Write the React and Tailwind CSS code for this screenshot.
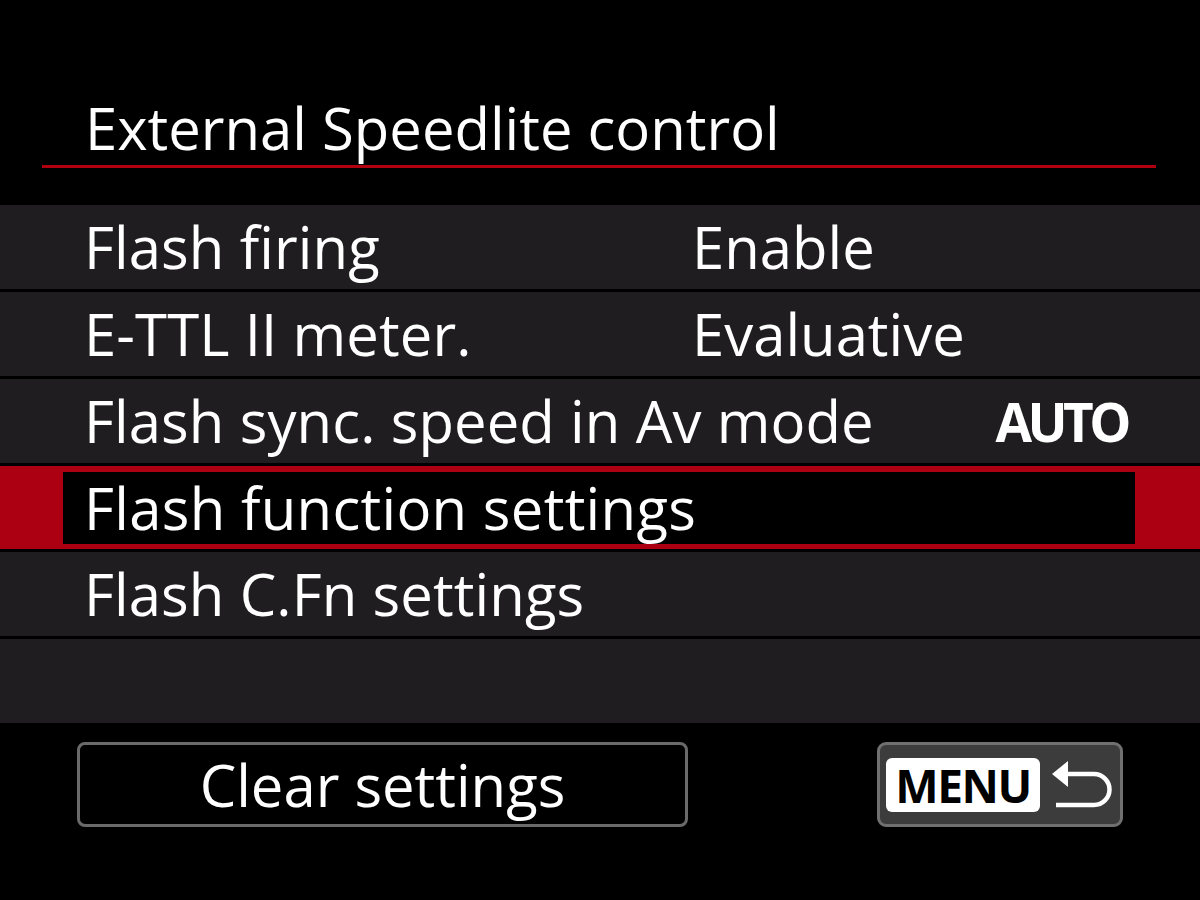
import React from 'react';

const rows = [
  { label: 'Flash firing', value: 'Enable' },
  { label: 'E-TTL II meter.', value: 'Evaluative' },
  { label: 'Flash sync. speed in Av mode', value: 'AUTO', bold: true },
  { label: 'Flash function settings', selected: true },
  { label: 'Flash C.Fn settings' },
];

const ReturnIcon = () => (
  <svg width="62" height="56" viewBox="0 0 62 56" className="block">
    <path d="M0 17 L16 4 L16 30 Z" fill="white" />
    <path d="M14 17 H42 A15.5 15.5 0 0 1 42 48 H4" fill="none" stroke="white" strokeWidth="4.5" />
  </svg>
);

const Row = ({ label, value, bold, selected }) => {
  if (selected) {
    return (
      <div className="h-[86px] bg-[#ac0012] flex items-center border-b-[3px] border-black">
        <div className="ml-[63px] w-[1072px] h-[72px] bg-black flex items-center pl-[21px]">
          <span className="text-[58px] leading-none whitespace-nowrap tracking-[0.3px]">{label}</span>
        </div>
      </div>
    );
  }
  return (
    <div className="h-[87px] bg-[#1f1d1f] flex items-center border-b-[3px] border-black pl-[84px]">
      <span className="text-[58px] leading-none min-w-[608px] whitespace-nowrap tracking-[0.1px]">{label}</span>
      {value && !bold && <span className="text-[58px] leading-none whitespace-nowrap">{value}</span>}
      {bold && <span className="ml-auto mr-[73px] text-[53px] font-bold leading-none tracking-[-4.5px]">{value}</span>}
    </div>
  );
};

export default function App() {
  return (
    <div className="w-[1200px] h-[900px] bg-black text-white font-['Open_Sans',sans-serif] overflow-hidden">
      <div className="h-[205px] flex flex-col">
        <div className="h-[165px] pl-[85px] flex items-end pb-[8px]">
          <span className="text-[58px] leading-none whitespace-nowrap">External Speedlite control</span>
        </div>
        <div className="ml-[42px] w-[1114px] h-[3px] bg-[#b0000f]" />
      </div>
      <div className="flex flex-col">
        {rows.map((r) => (
          <Row key={r.label} {...r} />
        ))}
        <div className="h-[84px] bg-[#1f1d1f]" />
      </div>
      <div className="flex items-center justify-between pl-[77px] pr-[77px] pt-[19px]">
        <div className="w-[611px] h-[85px] border-[3px] border-[#6a6a6a] rounded-[8px] flex items-center justify-center">
          <span className="text-[58px] leading-none whitespace-nowrap">Clear settings</span>
        </div>
        <div className="w-[246px] h-[85px] border-[3px] border-[#707070] bg-[#3d3c3d] rounded-[9px] flex items-center pl-[6px] gap-[12px]">
          <div className="w-[154px] h-[54px] bg-white rounded-[6px] flex items-center justify-center">
            <span className="text-[46px] font-bold text-black leading-none tracking-[-1.5px]">MENU</span>
          </div>
          <ReturnIcon />
        </div>
      </div>
    </div>
  );
}
